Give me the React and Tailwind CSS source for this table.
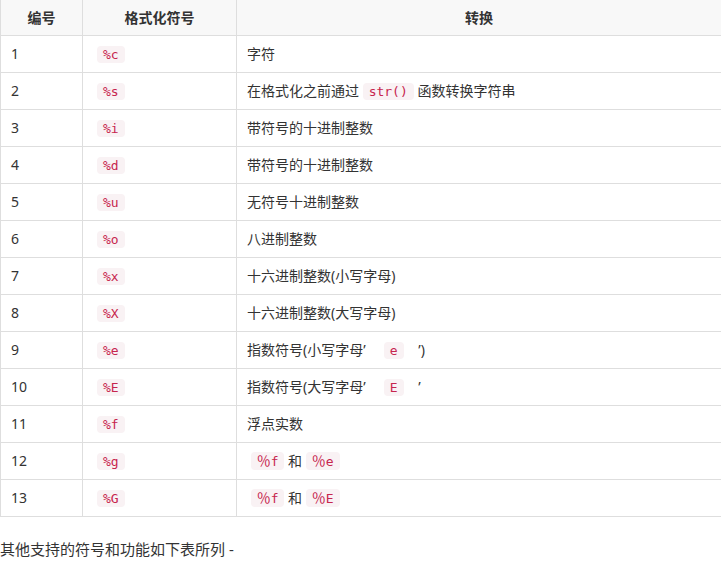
const ROWS = [
  { id: 1, code: '%c', desc: ['字符'] },
  { id: 2, code: '%s', desc: ['在格式化之前通过 ', { code: 'str()' }, ' 函数转换字符串'] },
  { id: 3, code: '%i', desc: ['带符号的十进制整数'] },
  { id: 4, code: '%d', desc: ['带符号的十进制整数'] },
  { id: 5, code: '%u', desc: ['无符号十进制整数'] },
  { id: 6, code: '%o', desc: ['八进制整数'] },
  { id: 7, code: '%x', desc: ['十六进制整数(小写字母)'] },
  { id: 8, code: '%X', desc: ['十六进制整数(大写字母)'] },
  { id: 9, code: '%e', desc: ['指数符号(小写字母’\u00a0\u00a0\u00a0\u00a0 ', { code: 'e' }, '\u00a0\u00a0\u00a0\u00a0’)'] },
  { id: 10, code: '%E', desc: ['指数符号(大写字母’\u00a0\u00a0\u00a0\u00a0 ', { code: 'E' }, '\u00a0\u00a0\u00a0\u00a0’'] },
  { id: 11, code: '%f', desc: ['浮点实数'] },
  { id: 12, code: '%g', desc: [' ', { code: 'f', wide: true }, ' 和 ', { code: 'e', wide: true }] },
  { id: 13, code: '%G', desc: [' ', { code: 'f', wide: true }, ' 和 ', { code: 'E', wide: true }] },
];

function Code({ children, wide }) {
  return (
    <code className="inline-block rounded-[4px] bg-[#f9f2f4] px-[6px] py-px font-['DejaVu_Sans_Mono','Liberation_Mono',monospace] text-[13px] leading-[15px] text-[#c7254e]">
      {wide && <span className="font-['Noto_Sans_CJK_SC',sans-serif] text-[14px]">％</span>}
      {children}
    </code>
  );
}

export default function App() {
  return (
    <div className="w-[721px] h-[567px] overflow-hidden bg-white font-['Noto_Sans','Noto_Sans_CJK_SC',sans-serif] text-[14px] text-[#333]">
      <table className="w-[722px] border-collapse table-fixed">
        <colgroup>
          <col className="w-[82px]" />
          <col className="w-[154px]" />
          <col />
        </colgroup>
        <thead>
          <tr className="h-[35px] bg-[#f8f8f8]">
            <th className="border-x border-b border-[#dedede] font-bold text-center">编号</th>
            <th className="border-x border-b border-[#dedede] font-bold text-center">格式化符号</th>
            <th className="border-x border-b border-[#dedede] font-bold text-center">转换</th>
          </tr>
        </thead>
        <tbody>
          {ROWS.map((row) => (
            <tr key={row.id} className="h-[37px]">
              <td className="border border-[#dedede] px-[10px] align-middle">{row.id}</td>
              <td className="border border-[#dedede] pl-[14px] align-middle">
                <Code>{row.code}</Code>
              </td>
              <td className="border border-[#dedede] px-[10px] align-middle whitespace-pre">
                {row.desc.map((part, i) =>
                  typeof part === 'string' ? (
                    <span key={i}>{part}</span>
                  ) : (
                    <Code key={i} wide={part.wide}>
                      {part.code}
                    </Code>
                  )
                )}
              </td>
            </tr>
          ))}
        </tbody>
      </table>
      <p className="mt-[21px] text-[15px] leading-[22px]">其他支持的符号和功能如下表所列 -</p>
    </div>
  );
}
